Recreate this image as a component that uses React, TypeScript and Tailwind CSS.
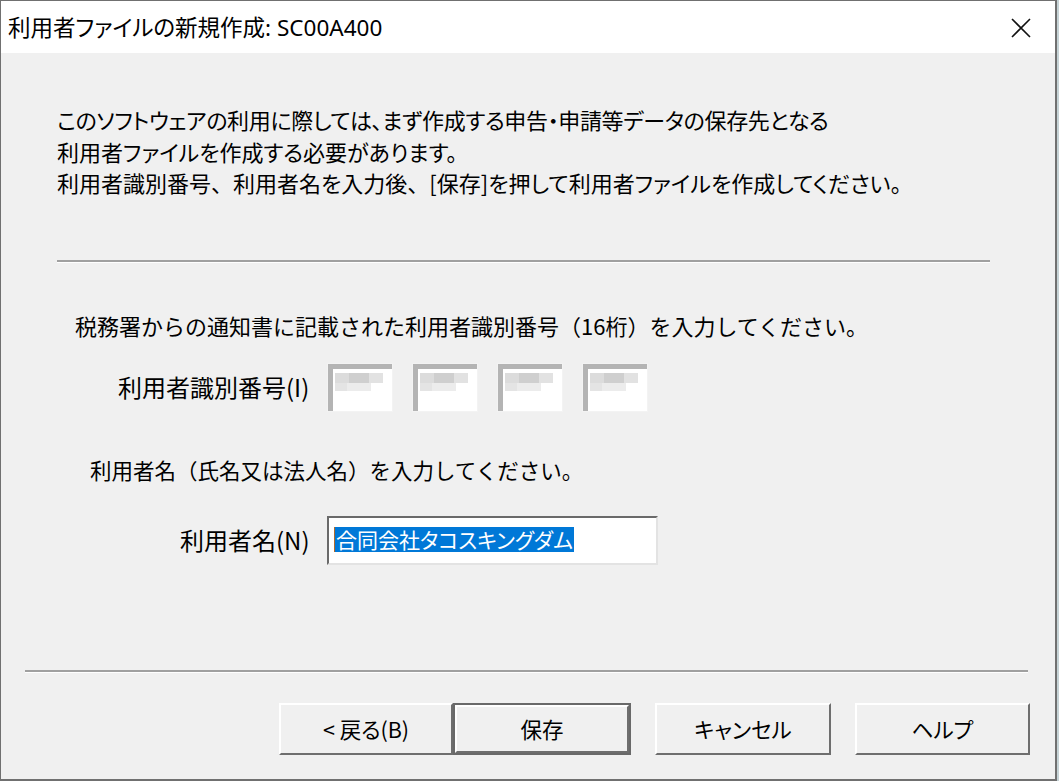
import React from "react";

const jp = "font-['Noto_Sans_CJK_JP',sans-serif] text-black";
const palt = "[font-feature-settings:'palt']";
const full = "[font-feature-settings:normal]";

function MaskedBox() {
    // pixelated / blurred identification-number field
    return (
        <div className="w-[66px] h-[49px] bg-[#f3f3f3] p-[1px]">
            <div className="w-full h-full border-t-[5px] border-l-[5px] border-[#b4b4b4] bg-white flex flex-col blur-[0.6px]">
                <div className="flex h-[10px] mt-[4px] ml-[2px]">
                    <div className="w-[14px] bg-[#dcdcdc]" />
                    <div className="w-[20px] bg-[#cfcfcf]" />
                    <div className="w-[14px] bg-[#e2e2e2]" />
                </div>
                <div className="flex h-[8px] ml-[2px]">
                    <div className="w-[12px] bg-[#e4e4e4]" />
                    <div className="w-[24px] bg-[#ececec]" />
                </div>
            </div>
        </div>
    );
}

function WinButton({
    label,
    width,
    isDefault = false,
}: {
    label: string;
    width: string;
    isDefault?: boolean;
}) {
    return (
        <button
            className={
                isDefault
                    ? `${width} h-[52px] border-2 border-[#696969] bg-[#f0f0f0] p-0`
                    : `${width} h-[52px] bg-[#f0f0f0] p-0`
            }
        >
            <div className="w-full h-full border-t-2 border-l-2 border-white border-r-2 border-b-2 border-r-[#6e6e6e] border-b-[#6e6e6e] flex items-center justify-center">
                <span className={`${jp} ${palt} text-[21.5px] leading-none`}>{label}</span>
            </div>
        </button>
    );
}

export default function App() {
    return (
        <div className="w-[1059px] h-[781px] bg-[#c6d3d6] overflow-hidden">
            <div className="w-[1057px] h-[781px] bg-[#f0f0f0] border-t border-l border-r-2 border-b-2 border-[#707070] flex flex-col">
                {/* Title bar */}
                <div className="h-[52px] bg-white flex items-center justify-between pl-[7px] pr-[24px]">
                    <span className="font-['Noto_Sans','Noto_Sans_CJK_JP',sans-serif] [font-feature-settings:'palt'] text-[22.5px] text-black leading-none mt-[2px]">
                        利用者ファイルの新規作成: SC00A400
                    </span>
                    <svg width="20" height="20" viewBox="0 0 20 20" className="mt-[1px]">
                        <path d="M1 1 L19 19 M19 1 L1 19" stroke="#111" strokeWidth="1.6" />
                    </svg>
                </div>

                {/* Body */}
                <div className={`${jp} flex flex-col`}>
                    <div className={`${palt} ml-[56px] mt-[51px] text-[22px] leading-[31.5px]`}>
                        <p className="tracking-[-0.35px]">
                            このソフトウェアの利用に際しては、まず作成する申告・申請等データの保存先となる
                        </p>
                        <p>利用者ファイルを作成する必要があります。</p>
                        <p>
                            利用者識別番号<span className={full}>、</span>利用者名を入力後
                            <span className={full}>、</span>[保存]を押して利用者ファイルを作成してください。
                        </p>
                    </div>

                    <div className="ml-[56px] mt-[61px] w-[933px] border-t-2 border-[#a0a0a0] border-b border-b-white" />

                    <p className="ml-[74px] mt-[47px] text-[22px] leading-[31px]">
                        税務署からの通知書に記載された利用者識別番号（16桁）を入力してください。
                    </p>

                    <div className="mt-[22px] flex items-center h-[49px]">
                        <span className={`${palt} ml-[117px] w-[193px] text-[24px] leading-none`}>利用者識別番号(I)</span>
                        <div className="ml-[16px] flex gap-[19px]">
                            <MaskedBox />
                            <MaskedBox />
                            <MaskedBox />
                            <MaskedBox />
                        </div>
                    </div>

                    <p className="ml-[89px] mt-[42px] text-[21.5px] leading-[31px]">
                        利用者名（氏名又は法人名）を入力してください。
                    </p>

                    <div className="mt-[31px] flex items-center h-[49px]">
                        <span className={`${palt} ml-[179px] w-[147px] text-[24px] leading-none`}>利用者名(N)</span>
                        <div className="w-[331px] h-[49px] border-t-2 border-l-2 border-[#6a6a6a] border-r-2 border-b-2 border-r-[#e3e3e3] border-b-[#e3e3e3] bg-white flex items-start pt-[9px] pl-[5px]">
                            <div className="w-[1px] h-[25px] bg-[#b06a2c]" />
                            <span className={`${palt} bg-[#0078d7] text-white text-[21px] leading-[25px] h-[25px] px-[1px]`}>
                                合同会社タコスキングダム
                            </span>
                        </div>
                    </div>

                    <div className="ml-[24px] mt-[105px] w-[1003px] border-t-2 border-[#a0a0a0] border-b border-b-white" />

                    <div className="mt-[30px] flex">
                        <div className="ml-[278px] flex">
                            <WinButton label="< 戻る(B)" width="w-[174px]" />
                            <WinButton label="保存" width="w-[178px]" isDefault />
                        </div>
                        <div className="ml-[24px]">
                            <WinButton label="キャンセル" width="w-[176px]" />
                        </div>
                        <div className="ml-[24px]">
                            <WinButton label="ヘルプ" width="w-[175px]" />
                        </div>
                    </div>
                </div>
            </div>
        </div>
    );
}
